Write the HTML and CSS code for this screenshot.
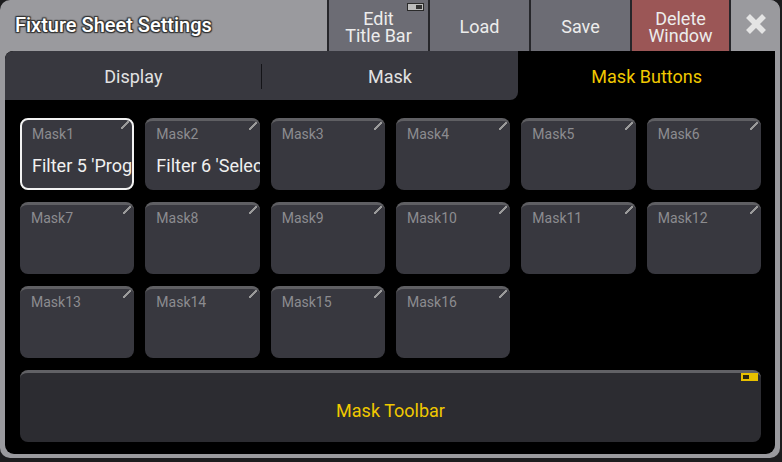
FILE: index.html
```html
<!DOCTYPE html>
<html lang="en">
<head>
    <meta charset="UTF-8">
    <title>Fixture Sheet Settings</title>
    <link rel="stylesheet" href="styles.css">
</head>
<body>
    <div class="window">
        <div class="titlebar">
            <div class="title">Fixture Sheet Settings</div>
            <div class="tb-btn edit">
                <span class="toggle"><i></i></span>
                <span>Edit<br>Title Bar</span>
            </div>
            <div class="tb-btn">Load</div>
            <div class="tb-btn">Save</div>
            <div class="tb-btn delete"><span>Delete<br>Window</span></div>
            <div class="tb-btn close">
                <svg width="22" height="22" viewBox="0 0 22 22">
                    <path d="M3 3 L19 19 M19 3 L3 19" stroke="#e4e4e4" stroke-width="5.5" stroke-linecap="butt"/>
                </svg>
            </div>
        </div>

        <div class="panel">
            <div class="tabs">
                <div class="tab first">Display</div>
                <div class="tab second">Mask</div>
                <div class="tab active">Mask Buttons</div>
            </div>

            <div class="grid">
                <div class="mask selected"><span class="name">Mask1</span><span class="value">Filter 5 'Programmer'</span></div>
                <div class="mask"><span class="name">Mask2</span><span class="value">Filter 6 'Selection'</span></div>
                <div class="mask"><span class="name">Mask3</span></div>
                <div class="mask"><span class="name">Mask4</span></div>
                <div class="mask"><span class="name">Mask5</span></div>
                <div class="mask"><span class="name">Mask6</span></div>
                <div class="mask"><span class="name">Mask7</span></div>
                <div class="mask"><span class="name">Mask8</span></div>
                <div class="mask"><span class="name">Mask9</span></div>
                <div class="mask"><span class="name">Mask10</span></div>
                <div class="mask"><span class="name">Mask11</span></div>
                <div class="mask"><span class="name">Mask12</span></div>
                <div class="mask"><span class="name">Mask13</span></div>
                <div class="mask"><span class="name">Mask14</span></div>
                <div class="mask"><span class="name">Mask15</span></div>
                <div class="mask"><span class="name">Mask16</span></div>

                <div class="toolbar">
                    Mask Toolbar
                    <span class="toggle on"><i></i></span>
                </div>
            </div>
        </div>
    </div>
</body>
</html>
```

FILE: styles.css
```css
* {
    margin: 0;
    padding: 0;
    box-sizing: border-box;
}

body {
    background-color: #1c1c1e;
    font-family: Roboto, "Liberation Sans", sans-serif;
    width: 782px;
    height: 462px;
    overflow: hidden;
}

.window {
    width: 780px;
    height: 458px;
    background-color: #9a9a9e;
    border-radius: 10px 10px 10px 10px;
    display: flex;
    flex-direction: column;
    overflow: hidden;
}

/* title bar */
.titlebar {
    height: 51px;
    display: flex;
    flex-shrink: 0;
}

.title {
    flex: 1;
    padding-left: 15px;
    padding-top: 13px;
    font-size: 20px;
    font-weight: 500;
    color: #fff;
    text-shadow: -1px -1px 1px #333, 1px -1px 1px #333, -1px 1px 1px #333, 1px 1px 1px #333, 0 0 2px #222;
}

.tb-btn {
    position: relative;
    width: 101px;
    border-left: 2px solid #26262a;
    background-color: #6c6c74;
    color: #ececec;
    font-size: 18px;
    line-height: 17px;
    text-align: center;
    display: flex;
    align-items: center;
    justify-content: center;
    padding-top: 2px;
}

.tb-btn.delete {
    background-color: #9b5656;
    border-right: 2px solid #26262a;
}

.tb-btn.close {
    width: 49px;
    border-left: none;
    background-color: #9a9a9e;
    padding: 0 0 3px 0;
}

.toggle {
    position: absolute;
    top: 3px;
    right: 4px;
    width: 17px;
    height: 8px;
    border: 1px solid #2a2a2a;
    background-color: #bdbdbd;
}

.toggle i {
    position: absolute;
    top: 1px;
    right: 1px;
    width: 6px;
    height: 4px;
    background-color: #333;
}

/* tabs + content */
.panel {
    flex: 1;
    margin: 0 5px 4px 5px;
    background-color: #000;
    border-radius: 8px 0 9px 9px;
    overflow: hidden;
    display: flex;
    flex-direction: column;
}

.tabs {
    height: 49px;
    display: flex;
    flex-shrink: 0;
}

.tab {
    flex: 1;
    display: flex;
    align-items: center;
    justify-content: center;
    font-size: 18px;
    color: #e2e2e2;
    background-color: #38383f;
    padding-top: 1px;
}

.tab.first {
    border-top-left-radius: 8px;
    position: relative;
}

.tab.first::after {
    content: '';
    position: absolute;
    right: 0;
    top: 13px;
    width: 1px;
    height: 25px;
    background-color: #141418;
}

.tab.second {
    border-bottom-right-radius: 8px;
}

.tab.active {
    background-color: #000;
    color: #f0c800;
}

.grid {
    flex: 1;
    padding: 18px 14px 13px 15px;
    display: grid;
    grid-template-columns: repeat(6, 1fr);
    grid-auto-rows: 72px;
    column-gap: 11px;
    row-gap: 12px;
}

.mask {
    position: relative;
    background-color: #38383f;
    border-top: 3px solid #5f5f63;
    border-radius: 8px;
    overflow: hidden;
    padding: 4px 0 0 11px;
    white-space: nowrap;
}

.mask::after {
    content: '';
    position: absolute;
    top: 1px;
    right: 3px;
    width: 8px;
    height: 8px;
    background: linear-gradient(to bottom right, transparent 42%, #9a9a9a 42%, #9a9a9a 58%, transparent 58%);
}

.mask.selected {
    border: 2px solid #f2f2f2;
    padding: 5px 0 0 10px;
}

.mask .name {
    display: block;
    font-size: 14px;
    line-height: 18px;
    color: #8c8c90;
}

.mask .value {
    display: block;
    margin-top: 12px;
    font-size: 18px;
    line-height: 22px;
    color: #f0f0f0;
}

.toolbar {
    position: relative;
    grid-column: 1 / -1;
    background-color: #2c2c31;
    border-top: 3px solid #616165;
    border-radius: 8px;
    display: flex;
    align-items: center;
    justify-content: center;
    font-size: 18px;
    color: #f0c800;
    padding-top: 5px;
}

.toggle.on {
    top: 0;
    right: 3px;
    width: 17px;
    height: 8px;
    border-color: #e8c000;
    background-color: #e8c000;
}

.toggle.on i {
    left: 1px;
    right: auto;
    background-color: #2a2610;
}
```
